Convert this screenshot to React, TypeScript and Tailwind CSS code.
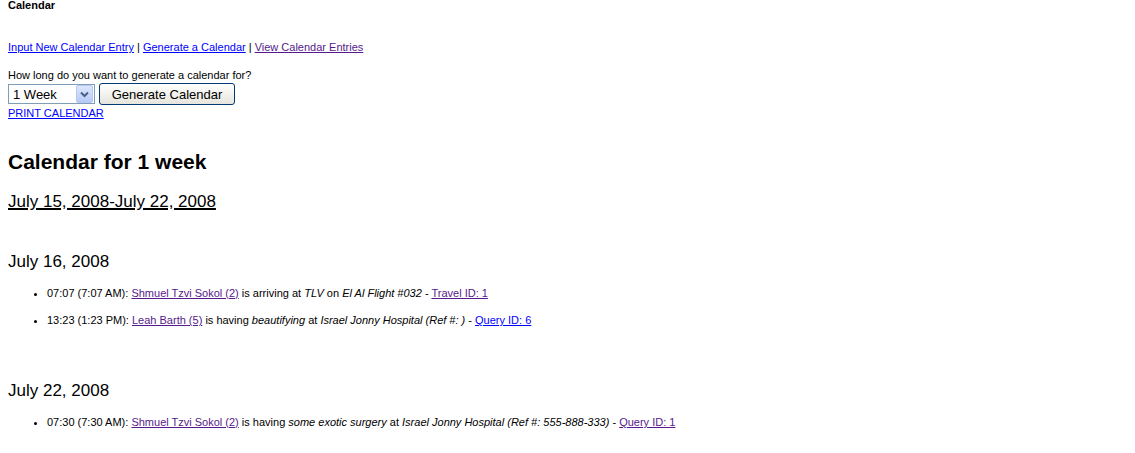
import React from "react";

const visited = "text-[#551a8b] underline";
const fresh = "text-[#0000ff] underline";

const Chevron: React.FC = () => (
  <svg width="9" height="7" viewBox="0 0 9 7">
    <path d="M1 1.5 L4.5 5 L8 1.5" fill="none" stroke="#4d6185" strokeWidth="2" />
  </svg>
);

type Entry = { content: React.ReactNode };

const Day: React.FC<{ title: string; entries: Entry[]; top: string }> = ({ title, entries, top }) => (
  <div className={top}>
    <h3 className="text-[17px] leading-[17px]">{title}</h3>
    <ul className="list-disc pl-[39px] mt-[18px] text-[11px] leading-[11px]">
      {entries.map((e, i) => (
        <li key={i} className={i > 0 ? "mt-[16px]" : ""}>
          {e.content}
        </li>
      ))}
    </ul>
  </div>
);

const App: React.FC = () => {
  return (
    <main className="w-[1135px] h-[453px] bg-white text-black px-2 overflow-hidden font-['Liberation_Sans',Arial,sans-serif]">
      <div className="text-[11px] leading-[11px] font-bold">Calendar</div>

      {/* top nav */}
      <div className="text-[11px] leading-[11px] mt-[31px]">
        <a href="#" className={fresh}>Input New Calendar Entry</a> |{" "}
        <a href="#" className={fresh}>Generate a Calendar</a> |{" "}
        <a href="#" className={visited}>View Calendar Entries</a>
      </div>

      <div className="text-[11px] leading-[11px] mt-[17px]">How long do you want to generate a calendar for?</div>

      <div className="flex items-center gap-[4px] mt-[2px] h-[22px]">
        <div className="w-[87px] h-[20px] border border-[#7f9db9] flex items-center justify-between bg-white">
          <span className="text-[13px] leading-[13px] pl-[4px]">1 Week</span>
          <span className="w-[17px] h-[18px] mr-[1px] rounded-[2px] border border-[#b6c8f4] bg-gradient-to-b from-[#dde7fd] to-[#b7cbf7] flex items-center justify-center">
            <Chevron />
          </span>
        </div>
        <button className="w-[136px] h-[22px] rounded-[3px] border border-[#003c74] bg-gradient-to-b from-white to-[#e6e5dd] text-[13px] leading-[13px]">
          Generate Calendar
        </button>
      </div>

      <div className="text-[11px] leading-[11px] mt-[3px]">
        <a href="#" className={fresh}>PRINT CALENDAR</a>
      </div>

      <h1 className="text-[21px] leading-[21px] font-bold mt-[32px]">Calendar for 1 week</h1>
      <h2 className="text-[17px] leading-[17px] mt-[21px]">
        <span className="underline decoration-2">July 15, 2008-July 22, 2008</span>
      </h2>

      <Day
        top="mt-[43px]"
        title="July 16, 2008"
        entries={[
          {
            content: (
              <>
                07:07 (7:07 AM): <a href="#" className={visited}>Shmuel Tzvi Sokol (2)</a> is arriving at{" "}
                <i>TLV</i> on <i>El Al Flight #032</i> - <a href="#" className={visited}>Travel ID: 1</a>
              </>
            ),
          },
          {
            content: (
              <>
                13:23 (1:23 PM): <a href="#" className={visited}>Leah Barth (5)</a> is having <i>beautifying</i> at{" "}
                <i>Israel Jonny Hospital (Ref #: )</i> - <a href="#" className={fresh}>Query ID: 6</a>
              </>
            ),
          },
        ]}
      />

      <Day
        top="mt-[56px]"
        title="July 22, 2008"
        entries={[
          {
            content: (
              <>
                07:30 (7:30 AM): <a href="#" className={visited}>Shmuel Tzvi Sokol (2)</a> is having{" "}
                <i>some exotic surgery</i> at <i>Israel Jonny Hospital (Ref #: 555-888-333)</i> -{" "}
                <a href="#" className={visited}>Query ID: 1</a>
              </>
            ),
          },
        ]}
      />
    </main>
  );
};

export default App;
